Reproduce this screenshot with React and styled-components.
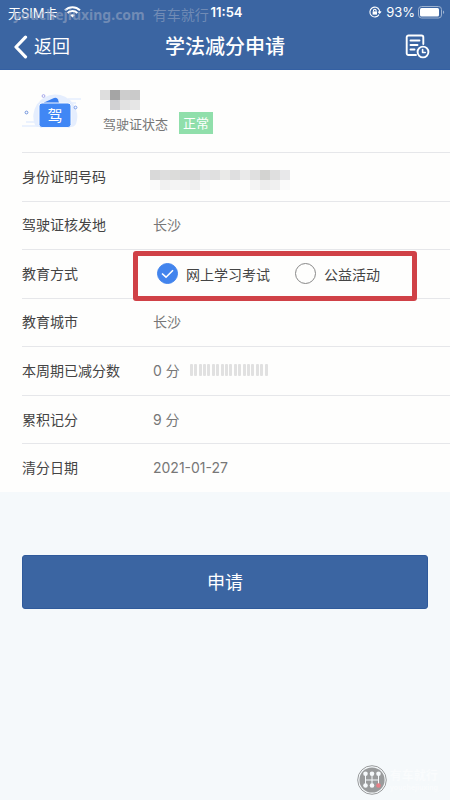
import React, { useState } from 'react';
import styled, { createGlobalStyle } from 'styled-components';

const GlobalStyle = createGlobalStyle`
  * {
    box-sizing: border-box;
  }

  body {
    margin: 0;
    background: #f5f9fb;
    color: #444;
    font-family: Inter, "Noto Sans CJK SC", sans-serif;
    font-size: 14px;
  }

  button {
    font-family: inherit;
    cursor: pointer;
  }
`;

const Page = styled.div`
  display: flex;
  flex-direction: column;
  min-height: 100vh;
`;

const TopArea = styled.header`
  position: relative;
  background: #3b65a2;
  border-bottom: 1px solid #3460a3;
  color: #fff;
`;

const StatusBar = styled.div`
  display: grid;
  grid-template-columns: 1fr auto 1fr;
  align-items: center;
  height: 24px;
  padding: 0 5px 0 8px;
  font-size: 13px;
`;

const StatusGroup = styled.div`
  display: flex;
  align-items: center;
  justify-content: ${({ $end }) => ($end ? 'flex-end' : 'flex-start')};
  gap: ${({ $end }) => ($end ? '3px' : '6px')};
`;

const Clock = styled.span`
  font-weight: 600;
`;

const SiteMark = styled.span`
  position: absolute;
  top: 4px;
  left: 13px;
  color: rgba(150, 165, 195, 0.6);
  font-family: "Noto Sans CJK SC", sans-serif;
  font-size: 14px;
  line-height: 20px;
  white-space: nowrap;

  b {
    margin-right: 8px;
    font-family: "Noto Sans", sans-serif;
  }
`;

const NavBar = styled.nav`
  display: grid;
  grid-template-columns: 1fr auto 1fr;
  align-items: center;
  height: 45px;
  padding: 0 13px;
`;

const Title = styled.h1`
  margin: 0;
  font-size: 20px;
  font-weight: 500;
  line-height: 24px;
`;

const NavButton = styled.button`
  display: flex;
  align-items: center;
  justify-self: ${({ $end }) => ($end ? 'end' : 'start')};
  gap: 6px;
  padding: 0 ${({ $end }) => ($end ? '7px' : '0')} 0 0;
  border: 0;
  background: none;
  color: #fff;
  font-size: 18px;
  line-height: 24px;
`;

const Panel = styled.main`
  background: #fefefd;
`;

const Profile = styled.section`
  display: flex;
  align-items: center;
  gap: 14px;
  height: 82px;
  padding: 2px 0 0 22px;
`;

const ProfileInfo = styled.div`
  display: flex;
  flex-direction: column;
  gap: 2px;
`;

const LicenseStatus = styled.div`
  display: flex;
  align-items: center;
  gap: 11px;
  padding-left: 3px;
  color: #777;
  font-size: 13px;
`;

const Badge = styled.span`
  padding: 0 4px;
  background: #90dfab;
  color: #fff;
  line-height: 22px;
`;

const InfoList = styled.div`
  display: grid;
  grid-auto-rows: 1fr;
  min-height: 340px;
  padding-left: 22px;
`;

const InfoRow = styled.div`
  display: flex;
  align-items: center;
  padding-bottom: 2px;
  border-top: 1px solid #e6e7ea;
`;

const RowLabel = styled.span`
  flex: 0 0 131px;
`;

const RowValue = styled.div`
  display: flex;
  align-items: center;
  gap: 10px;
  color: #777;
`;

const Options = styled.div`
  position: relative;
  display: flex;
  gap: 25px;
  padding: 2px 0 0 4px;

  &::after {
    content: '';
    position: absolute;
    inset: -10px -37px -17px -20px;
    border: 5px solid #d04147;
    border-radius: 3px;
    pointer-events: none;
  }
`;

const Option = styled.label`
  display: flex;
  align-items: center;
  gap: 8px;
  color: #444;
  cursor: pointer;
`;

const Radio = styled.input`
  appearance: none;
  width: 21px;
  height: 21px;
  margin: 0;
  border: 1px solid #888;
  border-radius: 50%;

  &:checked {
    border-color: #4284ed;
    background: #4284ed;
  }
`;

const RadioWrap = styled.span`
  position: relative;
  display: flex;

  svg {
    position: absolute;
    inset: 0;
    pointer-events: none;
  }
`;

const Meter = styled.div`
  display: flex;
  justify-content: space-between;
  width: 78px;
`;

const MeterBar = styled.i`
  width: 3px;
  height: 12px;
  border-radius: 1px;
  background: #e1e1e1;
`;

const Mosaic = styled.div`
  display: grid;
  grid-template-columns: repeat(${({ $cols }) => $cols}, 10px);
  grid-auto-rows: 10px;
  margin: ${({ $inRow }) => ($inRow ? '8px 0 0 -3px' : '0')};
`;

const Tile = styled.i`
  background: ${({ $color }) => $color};
`;

const Actions = styled.section`
  padding: 63px 22px 20px;
`;

const SubmitButton = styled.button`
  width: 100%;
  height: 54px;
  padding: 0 0 2px;
  border: 1px solid #2f5a9b;
  border-radius: 3px;
  background: #3b65a2;
  color: #fff;
  font-size: 18px;
`;

const Footer = styled.footer`
  display: flex;
  align-items: center;
  justify-content: flex-end;
  gap: 3px;
  margin-top: auto;
  padding: 0 12px 5px 0;
`;

const BrandText = styled.div`
  display: flex;
  flex-direction: column;
  color: #fafcfd;
  font-size: 12px;
  font-weight: 700;
  line-height: 16px;

  small {
    font-size: 7px;
    line-height: 8px;
  }
`;

const NAME_TILES = ['#dedede', '#a5a5a5', '#cdcdcd', '#cacaca', '#fdfdfd', '#d1d1d3', '#e2e2e2', '#e6e6e6'];

const ID_TILES = [
  '#d9d9d9', '#dedede', '#dcdcda', '#d8d8d8', '#d7d7d7', '#e2e2e4', '#e0e0e0',
  '#eaeae8', '#dfdfe0', '#eaeaea', '#e0e0e0', '#d3d3d1', '#dfdfdf', '#e8e8ea',
  '#fafafa', '#f1f1f1', '#f4f4f4', '#f4f4f4', '#f0f0f0', '#fafafa', '#fefefd',
  '#fefefd', '#fefefd', '#fefefd', '#f4f4f4', '#ededed', '#f0f0f0', '#fafafa',
];

const METHODS = ['网上学习考试', '公益活动'];

const WifiIcon = () => (
  <svg width="17" height="12" viewBox="0 0 17 12" fill="none" stroke="#fff" strokeWidth="2">
    <path d="M1 4.2C5.2.1 11.8.1 16 4.2M3.6 7C6.4 4.3 10.6 4.3 13.4 7" />
    <path d="M8.5 11.6 6 9.1c1.4-1.3 3.6-1.3 5 0z" fill="#fff" stroke="none" />
  </svg>
);

const LockIcon = () => (
  <svg width="14" height="12" viewBox="0 0 14 12" fill="none" stroke="#fff" strokeWidth="1.1">
    <path d="M10.3 4.1A4.9 4.9 0 1 0 10 8.600" />
    <path d="M10.300 4.100q.4 1 .3 2.100M9 5.600l1.600 1.500 1.500-1.700" />
    <rect x="3.600" y="5.400" width="4.400" height="3.200" fill="#fff" stroke="none" />
    <path d="M4.500 5.600V4.500a1.300 1.300 0 0 1 2.600 0v1.100" />
  </svg>
);

const BatteryIcon = () => (
  <svg width="27" height="13" viewBox="0 0 27 13" fill="none">
    <rect x=".5" y=".5" width="23" height="11.5" rx="3" stroke="#9db2d0" />
    <rect x="2" y="2" width="19" height="8.5" rx="1.5" fill="#fff" />
    <path d="M25 4.5c1.6.6 1.6 3 0 3.6z" fill="#9db2d0" />
  </svg>
);

const BackIcon = () => (
  <svg width="15" height="24" viewBox="0 0 15 24" fill="none" stroke="#fff" strokeWidth="3.2" strokeLinecap="round" strokeLinejoin="round">
    <path d="M12.5 2.2 3 12l9.5 9.8" />
  </svg>
);

const RecordIcon = () => (
  <svg width="25" height="25" viewBox="0 0 25 25" fill="none" stroke="#fff" strokeWidth="1.9" strokeLinecap="round" strokeLinejoin="round">
    <path d="M11 21H3.5a1.8 1.8 0 0 1-1.8-1.8V3.3a1.8 1.8 0 0 1 1.8-1.8h13a1.8 1.8 0 0 1 1.8 1.8V10" />
    <path d="M5.5 6.5h9M5.5 11h7M5.5 15.5h4" />
    <circle cx="18" cy="18" r="5.4" />
    <path d="M17.6 15.5v3h2.6" strokeWidth="1.6" />
  </svg>
);

const LicenseArt = () => (
  <svg width="64" height="46" viewBox="0 0 64 46">
    <path d="M13 36A22 22 0 1 1 54 35c-1 2-3 3-5 3H17c-2 0-3-1-4-2z" fill="#e5eefe" />
    <path d="M46 10h13M46 14h8M4 33h12M0 37h16" stroke="#e5eefe" strokeWidth="1.4" />
    <circle cx="4.5" cy="23.5" r="1.4" fill="none" stroke="#6f93dc" />
    <circle cx="21.5" cy="7" r="1.4" fill="none" stroke="#a8a9eb" />
    <circle cx="53.5" cy="18.500" r="1.4" fill="none" stroke="#7d9eea" />
    <path d="M22 13.5l10-4.500q3-1 4 1.500l1.2 4H22z" fill="#397ff0" />
    <rect x="17" y="14" width="32" height="24.5" rx="3" fill="#4087f5" stroke="#f4f8ff" />
    <text x="33" y="32" textAnchor="middle" fontSize="15" fill="#fff">驾</text>
  </svg>
);

const BrandIcon = () => (
  <svg width="30" height="30" viewBox="0 0 30 30" fill="none">
    <circle cx="15" cy="15" r="14.3" stroke="#999b9c" />
    <circle cx="15" cy="15" r="12.6" fill="#999b9c" />
    <path d="M8.5 9v11M15 9v11M21.5 9v11M8.5 15h13" stroke="#f5f9fb" />
    {[8.5, 15, 21.5].map((x) => (
      <React.Fragment key={x}>
        <circle cx={x} cy="8.8" r="2.3" fill="#f5f9fb" />
        <circle cx={x} cy="20.5" r="2.3" fill={x === 21.5 ? '#e77e86' : '#f5f9fb'} />
      </React.Fragment>
    ))}
  </svg>
);

const CheckMark = () => (
  <svg width="21" height="21" viewBox="0 0 21 21" fill="none" stroke="#fff" strokeWidth="1.6">
    <path d="M5 10.5 9 14.2l7-7" />
  </svg>
);

const Row = ({ label, children }) => (
  <InfoRow>
    <RowLabel>{label}</RowLabel>
    <RowValue>{children}</RowValue>
  </InfoRow>
);

const MosaicBox = ({ cols, tiles, inRow }) => (
  <Mosaic $cols={cols} $inRow={inRow}>
    {tiles.map((color, index) => (
      <Tile key={index} $color={color} />
    ))}
  </Mosaic>
);

const App = () => {
  const [method, setMethod] = useState(METHODS[0]);

  return (
    <>
      <GlobalStyle />
      <Page>
        <TopArea>
          <SiteMark>
            <b>youchejiuxing.com</b>有车就行
          </SiteMark>
          <StatusBar>
            <StatusGroup>
              <span>无SIM卡</span>
              <WifiIcon />
            </StatusGroup>
            <Clock>11:54</Clock>
            <StatusGroup $end>
              <LockIcon />
              <span>93%</span>
              <BatteryIcon />
            </StatusGroup>
          </StatusBar>
          <NavBar>
            <NavButton type="button">
              <BackIcon />
              返回
            </NavButton>
            <Title>学法减分申请</Title>
            <NavButton type="button" aria-label="记录" $end>
              <RecordIcon />
            </NavButton>
          </NavBar>
        </TopArea>

        <Panel>
          <Profile>
            <LicenseArt />
            <ProfileInfo>
              <MosaicBox cols={4} tiles={NAME_TILES} />
              <LicenseStatus>
                驾驶证状态
                <Badge>正常</Badge>
              </LicenseStatus>
            </ProfileInfo>
          </Profile>
          <InfoList>
            <Row label="身份证明号码">
              <MosaicBox cols={14} tiles={ID_TILES} inRow />
            </Row>
            <Row label="驾驶证核发地">长沙</Row>
            <Row label="教育方式">
              <Options role="radiogroup" aria-label="教育方式">
                {METHODS.map((name) => (
                  <Option key={name}>
                    <RadioWrap>
                      <Radio
                        type="radio"
                        name="method"
                        checked={method === name}
                        onChange={() => setMethod(name)}
                      />
                      {method === name && <CheckMark />}
                    </RadioWrap>
                    {name}
                  </Option>
                ))}
              </Options>
            </Row>
            <Row label="教育城市">长沙</Row>
            <Row label="本周期已减分数">
              <span>0 分</span>
              <Meter>
                {Array.from({ length: 18 }, (_, index) => (
                  <MeterBar key={index} />
                ))}
              </Meter>
            </Row>
            <Row label="累积记分">9 分</Row>
            <Row label="清分日期">2021-01-27</Row>
          </InfoList>
        </Panel>

        <Actions>
          <SubmitButton type="button">申请</SubmitButton>
        </Actions>

        <Footer>
          <BrandIcon />
          <BrandText>
            有车就行
            <small>youchejiuxing</small>
          </BrandText>
        </Footer>
      </Page>
    </>
  );
};

export default App;
